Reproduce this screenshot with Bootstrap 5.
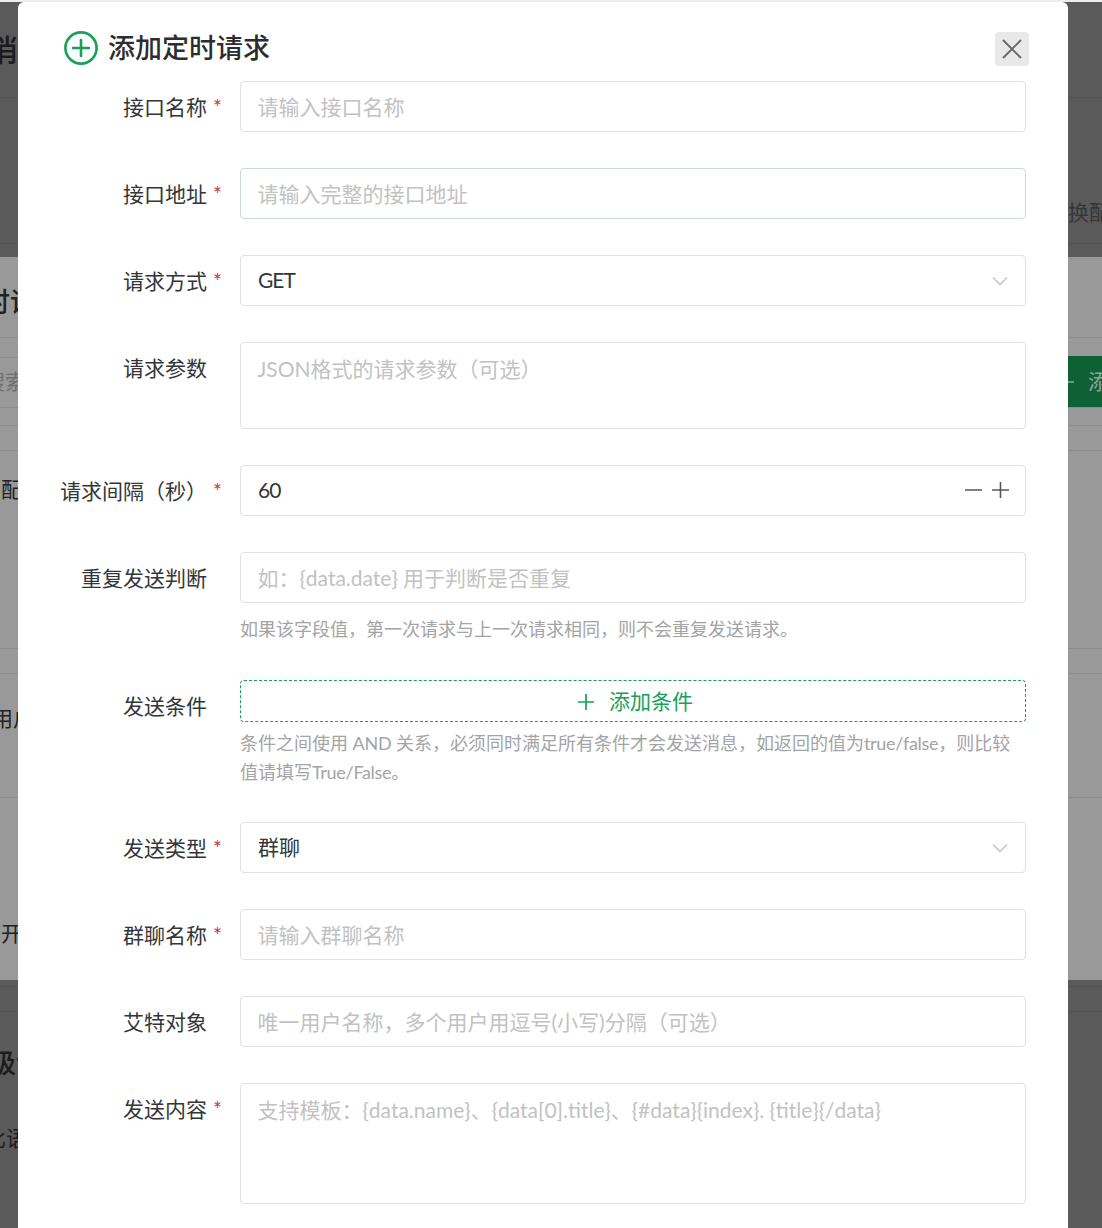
<!DOCTYPE html>
<html lang="zh-CN">
<head>
<meta charset="utf-8">
<title>添加定时请求</title>
<link rel="stylesheet" href="https://cdn.jsdelivr.net/npm/bootstrap@5.3.0/dist/css/bootstrap.min.css">
<style>
html,body{height:1228px;overflow:hidden;margin:0}
body{position:relative;background:#5a5a5a;font-family:Lato,"Noto Sans CJK SC",sans-serif;color:#333639}
.top-strip{height:2px;background:#eee}
.zone-dark{background:#5a5a5a;color:#1c1c1c}
.zone-light{background:#999;color:#222}
.bg-row{overflow:hidden;white-space:nowrap;border-bottom:1px solid #8d8d8d}
.zone-dark .bg-row{border-bottom-color:#525252}
.bg-row.no-line{border-bottom:0}
.h-a{height:96px;padding-top:26px}.h-b{height:146px}.h-c{height:13px}
.h-d{height:81px;padding-top:26px}.h-e{height:20px}.h-f{height:50px}.h-g{height:18px}.h-h{height:25px}
.h-i{height:198px;padding-top:23px}.h-j{height:25px}.h-k{height:124px;padding-top:29px}.h-l{height:182px;padding-top:120px}
.h-m{height:7px}.h-n{height:25px}.h-o{height:216px;padding-top:32px}
.bt-big{font-size:30px;font-weight:500;line-height:42px}
.bt-mid{font-size:27px;font-weight:500;line-height:38px}
.bt-norm{font-size:21px;line-height:30px}
.bt-faint{color:#6f6f6f}
.shift-a{margin-left:-12px}.shift-b{margin-left:-17px}.shift-c{margin-left:-16px}.shift-d{margin-left:1px}.shift-e{margin-left:-11px}.shift-f{margin-left:-29px}.shift-g{margin-left:-15px}
.gap-lang{margin-top:41px}
.raise-faint{margin-top:-4px}
.swap-text{position:absolute;right:-29px;top:197px}
.green-under{position:absolute;right:0;top:356px;width:40px;height:51px;background:#0e6035;color:#8fa89b;font-size:21px;line-height:50px;white-space:nowrap}
.green-under svg{margin-left:-4px;margin-right:14px;vertical-align:-1px}
.sheet{position:absolute;left:18px;top:2px;width:1050px;height:1300px;border:0;border-radius:6px;background:#fff;padding:0 42px}
.sheet-head{height:79px;padding:29px 0 0 4px}
.sheet-title{font-size:27px;font-weight:500;line-height:32px;color:#2b2d30;margin:1px 0 0 10px}
.shut-btn{width:34px;height:34px;padding:0;margin-right:-3px;margin-top:1px;border:0;border-radius:4px;background:#e8e8e8}
.f-line{margin-bottom:36px}
.f-line.tight{margin-bottom:0}
.f-label{width:162px;flex:none;margin-right:18px;font-size:21px;line-height:30px;padding-top:11px;color:#333639;text-align:right;white-space:nowrap}
.req-mark{display:inline-block;width:9px;margin-left:6px;color:#d03050;text-align:left}
.f-body{width:786px;flex:none}
.form-control.f-box{height:51px;padding:0 16px 2px 17px;border:1px solid #e0e0e6;border-radius:4px;font-size:21px;line-height:30px;color:#333639;background:#fff;box-shadow:none}
input.form-control.f-box{padding:0 16px 0 16.5px}
textarea.form-control.f-box{resize:none;padding:11px 16px 0 16.5px;line-height:30px}
.form-control.f-box::placeholder{color:#c2c2c2;opacity:1}
.form-control.f-box.tinted{border-color:#c8dbd3}
.area-a{min-height:87px;height:87px!important}
.area-b{min-height:121px;height:121px!important}
.val-tight{letter-spacing:-1px}
.latin-slim{letter-spacing:-.3px}
.chev-down{margin-top:3px;margin-right:1px}
.f-help{font-size:18px;line-height:29px;color:#a3a4a6;padding-top:12px}
.f-help.first{height:77px}
.f-help.second{height:100px;padding-top:7px}
.dash-btn{height:42px;width:100%;padding:0 0 0 4px;border:1px dashed #18a058;border-radius:4px;background:#fff;color:#18a058;font-size:21px;line-height:36px}
.dash-btn svg{margin-right:14px;vertical-align:-2px}
</style>
</head>
<body>
<div class="top-strip"></div>
<div class="zone-dark">
  <div class="bg-row h-a"><div class="bt-big shift-a">消息</div></div>
  <div class="bg-row h-b"></div>
  <div class="bg-row no-line h-c"></div>
</div>
<div class="zone-light">
  <div class="bg-row h-d"><div class="bt-mid shift-b">时请</div></div>
  <div class="bg-row h-e"></div>
  <div class="bg-row h-f d-flex align-items-center"><div class="bt-norm bt-faint shift-c raise-faint">搜索</div></div>
  <div class="bg-row h-g"></div>
  <div class="bg-row h-h"></div>
  <div class="bg-row h-i"><div class="bt-norm shift-d">配置</div></div>
  <div class="bg-row h-j"></div>
  <div class="bg-row h-k"><div class="bt-norm shift-f">启用户</div></div>
  <div class="bg-row no-line h-l"><div class="bt-norm shift-d">开启</div></div>
</div>
<div class="zone-dark">
  <div class="bg-row h-m"></div>
  <div class="bg-row h-n"></div>
  <div class="bg-row no-line h-o">
    <div class="bt-mid shift-e">级设</div>
    <div class="bt-norm shift-g gap-lang">比语</div>
  </div>
</div>
<div class="swap-text bt-norm">换配置</div>
<div class="green-under"><svg width="16" height="16" viewBox="0 0 16 16" fill="none" stroke="#8fa89b" stroke-width="1.7"><path d="M8 0v16M0 8h16"/></svg>添加</div>

<div class="modal-content sheet">
  <div class="sheet-head d-flex align-items-start">
    <svg width="34" height="34" viewBox="0 0 34 34" fill="none" stroke="#18a058" stroke-width="2.6"><circle cx="17" cy="17" r="15.600"/><path d="M17 9v16M9 17h16" stroke-linecap="round"/></svg>
    <h5 class="sheet-title flex-grow-1">添加定时请求</h5>
    <button type="button" class="shut-btn d-flex align-items-center justify-content-center" aria-label="关闭">
      <svg width="20" height="20" viewBox="0 0 20 20" fill="none" stroke="#666" stroke-width="1.8"><path d="M1 1l18 18M19 1L1 19"/></svg>
    </button>
  </div>
  <form>
    <div class="d-flex f-line">
      <label class="f-label">接口名称<span class="req-mark">*</span></label>
      <div class="f-body"><input class="form-control f-box" placeholder="请输入接口名称"></div>
    </div>
    <div class="d-flex f-line">
      <label class="f-label">接口地址<span class="req-mark">*</span></label>
      <div class="f-body"><input class="form-control f-box tinted" placeholder="请输入完整的接口地址"></div>
    </div>
    <div class="d-flex f-line">
      <label class="f-label">请求方式<span class="req-mark">*</span></label>
      <div class="f-body"><div class="form-control f-box d-flex align-items-center justify-content-between"><span class="val-tight">GET</span>
        <svg class="chev-down" width="16" height="10" viewBox="0 0 16 10" fill="none" stroke="#c2c2c2" stroke-width="1.4"><path d="M1 1.5l7 7 7-7"/></svg></div></div>
    </div>
    <div class="d-flex f-line">
      <label class="f-label">请求参数<span class="req-mark invisible">*</span></label>
      <div class="f-body"><textarea class="form-control f-box area-a" placeholder="JSON格式的请求参数（可选）"></textarea></div>
    </div>
    <div class="d-flex f-line">
      <label class="f-label">请求间隔（秒）<span class="req-mark">*</span></label>
      <div class="f-body"><div class="form-control f-box d-flex align-items-center justify-content-between"><span class="val-tight">60</span>
        <svg width="44" height="18" viewBox="0 0 44 18" fill="none" stroke="#55585c" stroke-width="1.6"><path d="M0 9h17M27 9h17M35.500 1v16"/></svg></div></div>
    </div>
    <div class="d-flex f-line tight">
      <label class="f-label">重复发送判断<span class="req-mark invisible">*</span></label>
      <div class="f-body"><input class="form-control f-box" placeholder="如：{data.date} 用于判断是否重复">
        <div class="f-help first">如果该字段值，第一次请求与上一次请求相同，则不会重复发送请求。</div></div>
    </div>
    <div class="d-flex f-line tight">
      <label class="f-label">发送条件<span class="req-mark invisible">*</span></label>
      <div class="f-body"><button type="button" class="dash-btn"><svg width="18" height="18" viewBox="0 0 18 18" fill="none" stroke="#18a058" stroke-width="1.7"><path d="M9 1v16M1 9h16"/></svg>添加条件</button>
        <div class="f-help second">条件之间使用 <span class="latin-slim">AND</span> 关系，必须同时满足所有条件才会发送消息，如返回的值为<span class="latin-slim">true/false</span>，则比较值请填写<span class="latin-slim">True/False</span>。</div></div>
    </div>
    <div class="d-flex f-line">
      <label class="f-label">发送类型<span class="req-mark">*</span></label>
      <div class="f-body"><div class="form-control f-box d-flex align-items-center justify-content-between"><span>群聊</span>
        <svg class="chev-down" width="16" height="10" viewBox="0 0 16 10" fill="none" stroke="#c2c2c2" stroke-width="1.4"><path d="M1 1.5l7 7 7-7"/></svg></div></div>
    </div>
    <div class="d-flex f-line">
      <label class="f-label">群聊名称<span class="req-mark">*</span></label>
      <div class="f-body"><input class="form-control f-box" placeholder="请输入群聊名称"></div>
    </div>
    <div class="d-flex f-line">
      <label class="f-label">艾特对象<span class="req-mark invisible">*</span></label>
      <div class="f-body"><input class="form-control f-box" placeholder="唯一用户名称，多个用户用逗号(小写)分隔（可选）"></div>
    </div>
    <div class="d-flex f-line">
      <label class="f-label">发送内容<span class="req-mark">*</span></label>
      <div class="f-body"><textarea class="form-control f-box area-b" placeholder="支持模板：{data.name}、{data[0].title}、{#data}{index}. {title}{/data}"></textarea></div>
    </div>
  </form>
</div>
<script src="https://cdn.jsdelivr.net/npm/bootstrap@5.3.0/dist/js/bootstrap.bundle.min.js"></script>
</body>
</html>
